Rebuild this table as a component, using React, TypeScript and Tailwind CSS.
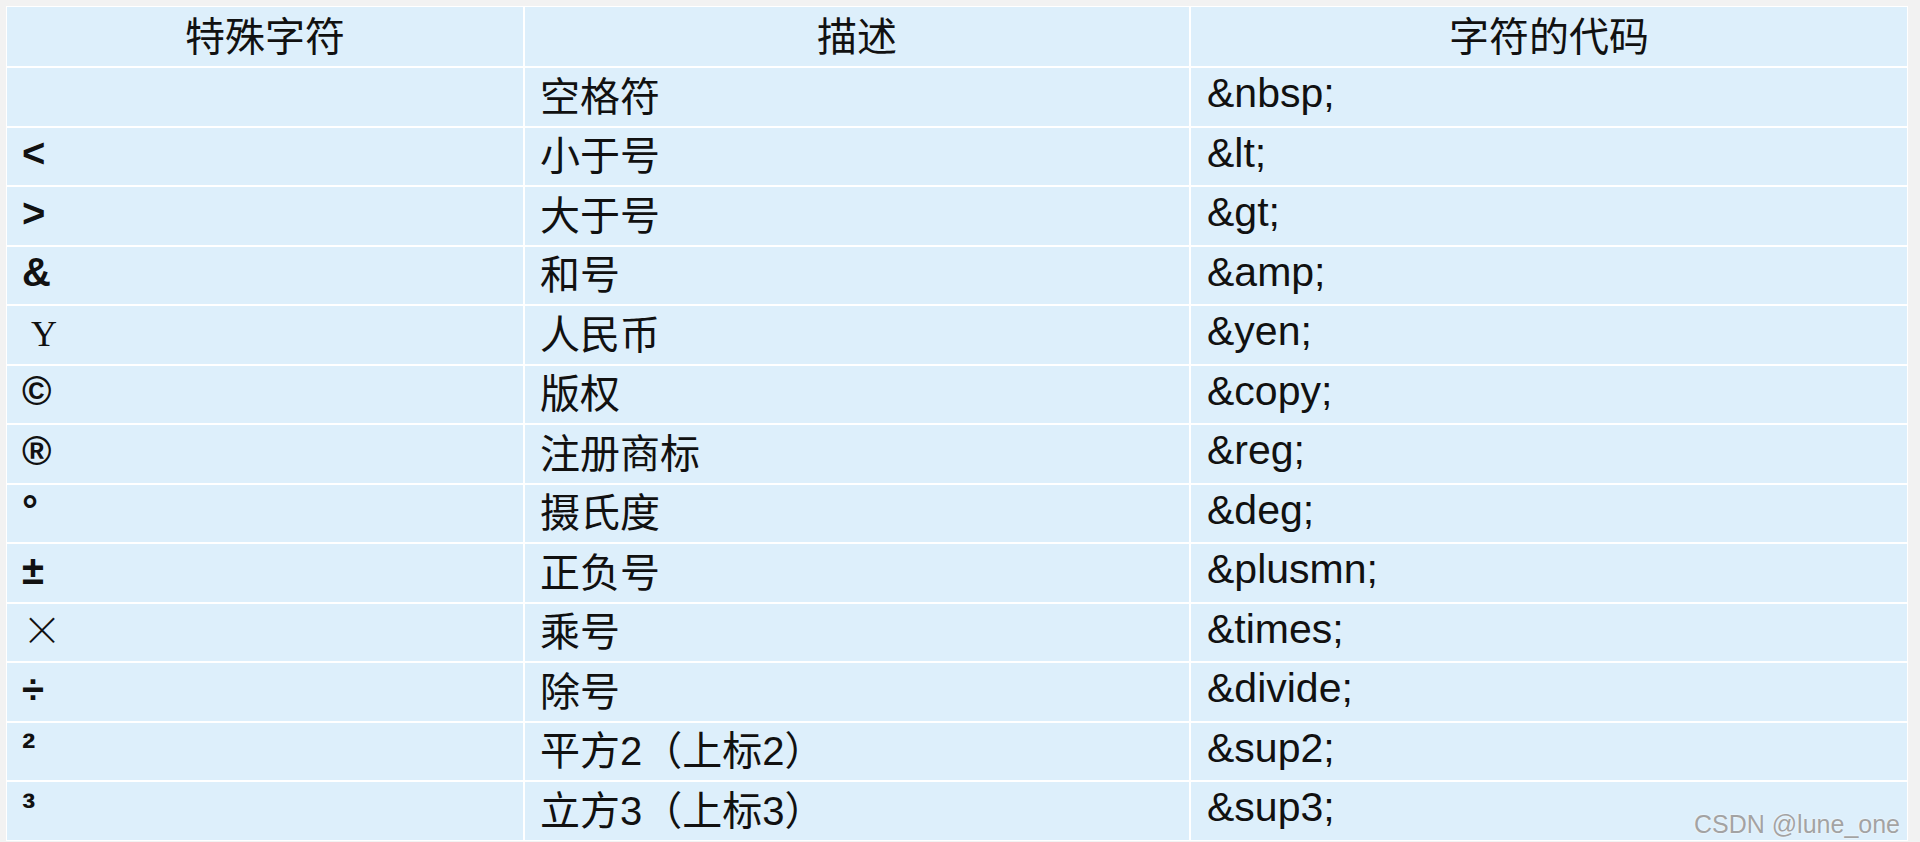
import React from "react";

type Row = { sym: React.ReactNode; desc: string; code: string };

const sans = "font-['Liberation_Sans','Noto_Sans_CJK_SC',sans-serif]";

const rows: Row[] = [
  { sym: "", desc: "空格符", code: "&nbsp;" },
  { sym: <span className="font-bold">&lt;</span>, desc: "小于号", code: "&lt;" },
  { sym: <span className="font-bold">&gt;</span>, desc: "大于号", code: "&gt;" },
  { sym: <span className="font-bold">&amp;</span>, desc: "和号", code: "&amp;" },
  { sym: <span className="ml-[9px] font-['Liberation_Serif',serif] text-[36px] font-normal">Y</span>, desc: "人民币", code: "&yen;" },
  { sym: <span className="font-bold">©</span>, desc: "版权", code: "&copy;" },
  { sym: <span className="font-bold">®</span>, desc: "注册商标", code: "&reg;" },
  { sym: <span className="font-bold">°</span>, desc: "摄氏度", code: "&deg;" },
  { sym: <span className="font-bold">±</span>, desc: "正负号", code: "&plusmn;" },
  { sym: <span className="font-['Noto_Sans_CJK_SC',sans-serif] font-light">×</span>, desc: "乘号", code: "&times;" },
  { sym: <span className="font-bold">÷</span>, desc: "除号", code: "&divide;" },
  { sym: <span className="font-bold">²</span>, desc: "平方2（上标2）", code: "&sup2;" },
  { sym: <span className="font-bold">³</span>, desc: "立方3（上标3）", code: "&sup3;" },
];

export default function App() {
  return (
    <div className={`w-[1920px] h-[842px] bg-[#f2f2f2] pt-[6px] pl-[6px] overflow-hidden ${sans} text-[#111]`}>
      <div className="relative w-[1902px] bg-white p-[1px]">
        <div className="grid grid-cols-[516px_664px_716px] gap-[2px]">
          <div className="h-[59px] bg-[#ddeffb] flex items-center justify-center text-[40px] leading-none">特殊字符</div>
          <div className="h-[59px] bg-[#ddeffb] flex items-center justify-center text-[40px] leading-none">描述</div>
          <div className="h-[59px] bg-[#ddeffb] flex items-center justify-center text-[40px] leading-none">字符的代码</div>
          {rows.map((r, i) => (
            <React.Fragment key={i}>
              <div className="h-[57.5px] bg-[#ddeffb] flex items-center pl-[15px] text-[40px] leading-none">
                <span className="-translate-y-[3px]">{r.sym}</span>
              </div>
              <div className="h-[57.5px] bg-[#ddeffb] flex items-center pl-[15px] text-[40px] leading-none">
                {r.desc}
              </div>
              <div className="h-[57.5px] bg-[#ddeffb] flex items-center pl-[16px] text-[41px] leading-none">
                <span className="-translate-y-[3px]">{r.code}</span>
              </div>
            </React.Fragment>
          ))}
        </div>
        <div className="absolute right-[8px] top-[806px] text-[25px] leading-none text-[#a3a3a3] font-['Liberation_Sans',sans-serif] [text-shadow:0_0_2px_#ffffff]">
          CSDN @lune_one
        </div>
      </div>
    </div>
  );
}
